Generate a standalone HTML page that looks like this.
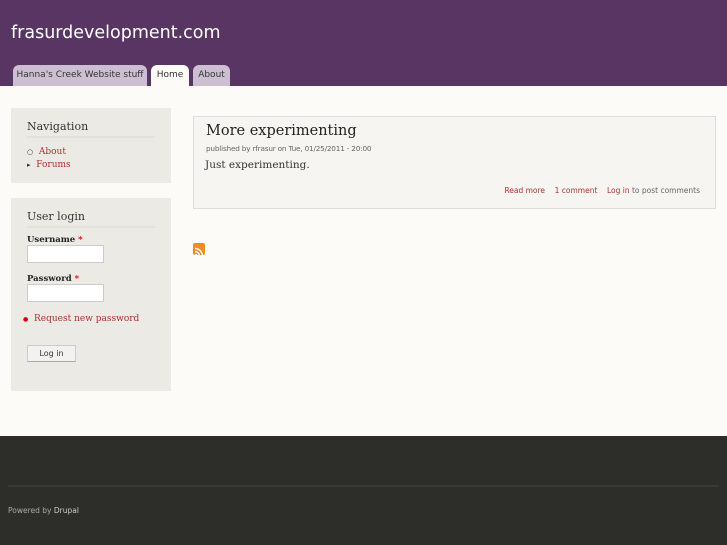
<!DOCTYPE html>
<html><head><style>
*{margin:0;padding:0;box-sizing:border-box}
body{width:727px;height:545px;background:#fcfbf7;font-family:"DejaVu Sans","Liberation Sans",sans-serif;position:relative;overflow:hidden}
#hd{position:absolute;left:0;top:0;width:727px;height:86px;background:#593563}
#site{position:absolute;left:11px;top:23px;color:#fff;font-size:17.5px}
.tab{position:absolute;top:65px;height:21px;border-radius:6px 6px 0 0;background:#cdbfd2;color:#333;font-size:9px;padding-top:5px;text-align:center}
.serif{font-family:"DejaVu Serif","Liberation Serif",serif}
.blk{position:absolute;left:11px;width:160px;background:#ebeae4}
.blk h2{position:absolute;left:16px;font-weight:normal;font-size:11px;color:#333;width:128px;border-bottom:2px solid #e2e1db;padding-bottom:3px}
a{color:#a33;text-decoration:none}
.sm{font-size:9px}
.lbl{position:absolute;left:16px;font-size:8.5px;font-weight:bold;color:#222}
.lbl span{color:#e00}
.inp{position:absolute;left:16px;width:77px;height:18px;background:#fff;border:1px solid #ccc}
#foot{position:absolute;left:0;top:436px;width:727px;height:109px;background:#2d2d29}
</style></head><body>
<div id="hd">
<div id="site">frasurdevelopment.com</div>
<div class="tab" style="left:13px;width:134px">Hanna's Creek Website stuff</div>
<div class="tab" style="left:151px;width:38px;background:#fcfbf7">Home</div>
<div class="tab" style="left:193px;width:37px">About</div>
</div>
<div class="blk serif" style="top:108px;height:75px">
<h2 style="top:12px">Navigation</h2>
<div class="sm" style="position:absolute;left:16px;top:38px;line-height:13px"><span style="font-size:7px;color:#333">○</span>&nbsp; <a>About</a><br><span style="font-size:7px;color:#333">▸</span>&nbsp; <a>Forums</a></div>
</div>
<div class="blk serif" style="top:198px;height:193px">
<h2 style="top:12px">User login</h2>
<div class="lbl" style="top:37px">Username <span>*</span></div>
<div class="inp" style="top:47px"></div>
<div class="lbl" style="top:76px">Password <span>*</span></div>
<div class="inp" style="top:86px"></div>
<div class="sm" style="position:absolute;left:12px;top:116px"><span style="color:#c00;font-size:6px">●</span>&nbsp; <a>Request new password</a></div>
<div style="position:absolute;left:16px;top:147px;width:49px;height:17px;background:#f2f2f0;border:1px solid #ccc;border-bottom-color:#aaa;font-size:8px;text-align:center;padding-top:3px;color:#333;font-family:'DejaVu Sans',sans-serif">Log in</div>
</div>
<div style="position:absolute;left:193px;top:116px;width:523px;height:93px;background:#f6f5f1;border:1px solid #ddd">
<div class="serif" style="position:absolute;left:12px;top:6px;font-size:14.5px;color:#222">More experimenting</div>
<div style="position:absolute;left:12px;top:27px;font-size:7.3px;color:#666;letter-spacing:-0.2px">published by rfrasur on Tue, 01/25/2011 - 20:00</div>
<div class="serif" style="position:absolute;left:11px;top:42px;font-size:10.5px;color:#333">Just experimenting.</div>
<div style="position:absolute;right:15px;top:69px;font-size:7.5px;color:#666"><a>Read more</a>&nbsp;&nbsp;&nbsp; <a>1 comment</a>&nbsp;&nbsp;&nbsp; <a>Log in</a> to post comments</div>
</div>
<div style="position:absolute;left:193px;top:243px;width:12px;height:12px;background:#f08a24;border-radius:2px"><svg width="12" height="12"><circle cx="3" cy="9" r="1.3" fill="#fff"/><path d="M2 5.5a4.5 4.5 0 0 1 4.5 4.5M2 2.5a7.5 7.5 0 0 1 7.5 7.5" stroke="#fff" stroke-width="1.4" fill="none"/></svg></div>
<div id="foot">
<div style="position:absolute;left:8px;top:49px;width:711px;height:2px;background:#3a3a35"></div>
<div style="position:absolute;left:8px;top:70px;font-size:7.5px;color:#aaa">Powered by <span style="color:#ccc">Drupal</span></div>
</div>
</body></html>
